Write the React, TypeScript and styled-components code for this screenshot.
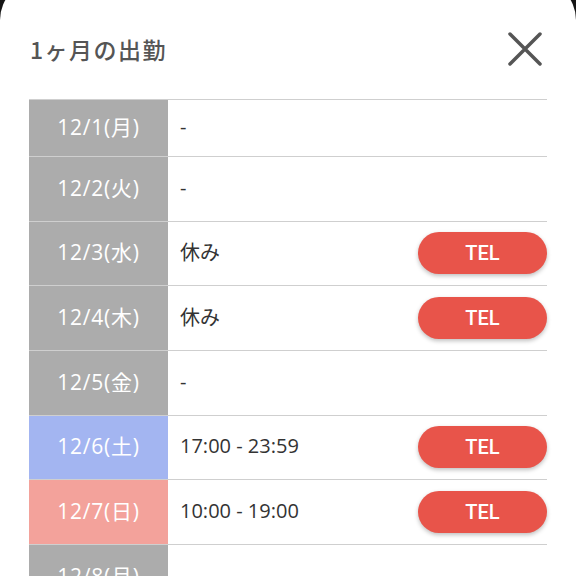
import styled, { createGlobalStyle } from 'styled-components'

const GlobalStyle = createGlobalStyle`
  html, body {
    margin: 0;
    padding: 0;
    background: #151515;
    height: 576px;
    overflow: hidden;
  }
  * {
    box-sizing: border-box;
  }
`

const Modal = styled.div`
  margin-top: -20px;
  background: #ffffff;
  border-radius: 40px 40px 0 0;
  min-height: 620px;
  padding: 44px 29px 0 29px;
  font-family: 'Open Sans', 'Noto Sans CJK JP', sans-serif;
`

const Header = styled.div`
  display: flex;
  align-items: center;
  justify-content: space-between;
  height: 50px;
  margin-bottom: 25px;
`

const Title = styled.h2`
  margin: 0 0 0 1px;
  font-family: 'Noto Sans CJK JP', sans-serif;
  font-size: 23px;
  font-weight: 500;
  color: #555555;
  letter-spacing: 1.5px;
`

const CloseButton = styled.button`
  border: none;
  background: none;
  padding: 0;
  margin-right: 5px;
  width: 34px;
  height: 34px;
  display: flex;
  cursor: pointer;
`

const Table = styled.div`
  border-top: 1px solid #cfcfcf;
`

const Row = styled.div<{ $first?: boolean }>`
  display: grid;
  grid-template-columns: 139px 1fr;
  height: ${(p) => (p.$first ? 57 : 64.67)}px;
  border-bottom: 1px solid #cfcfcf;
`

type DayKind = 'weekday' | 'sat' | 'sun'

const dayColors: Record<DayKind, string> = {
  weekday: '#acacac',
  sat: '#a3b5f1',
  sun: '#f3a29b',
}

const DateCell = styled.div<{ $kind: DayKind }>`
  background: ${(p) => dayColors[p.$kind]};
  color: #ffffff;
  font-size: 21px;
  font-weight: 400;
  letter-spacing: 0.8px;
  display: flex;
  align-items: center;
  justify-content: center;
  padding-bottom: 4px;
`

const InfoCell = styled.div`
  display: flex;
  align-items: center;
  justify-content: space-between;
  padding-left: 12px;
  font-size: 20px;
  font-weight: 400;
  color: #333333;
`

const InfoText = styled.span`
  padding-bottom: 3px;
`

const TelButton = styled.button`
  width: 129px;
  height: 42px;
  border: none;
  border-radius: 21px;
  background: #e8544a;
  color: #ffffff;
  font-family: Roboto, 'Noto Sans', sans-serif;
  font-size: 20px;
  font-weight: 500;
  box-shadow: 0 2px 4px rgba(0, 0, 0, 0.25);
  cursor: pointer;
`

type Day = {
  date: string
  kind: DayKind
  info: string
  tel: boolean
}

const days: Day[] = [
  { date: '12/1(月)', kind: 'weekday', info: '-', tel: false },
  { date: '12/2(火)', kind: 'weekday', info: '-', tel: false },
  { date: '12/3(水)', kind: 'weekday', info: '休み', tel: true },
  { date: '12/4(木)', kind: 'weekday', info: '休み', tel: true },
  { date: '12/5(金)', kind: 'weekday', info: '-', tel: false },
  { date: '12/6(土)', kind: 'sat', info: '17:00 - 23:59', tel: true },
  { date: '12/7(日)', kind: 'sun', info: '10:00 - 19:00', tel: true },
  { date: '12/8(月)', kind: 'weekday', info: '', tel: false },
]

const App = () => (
  <>
    <GlobalStyle />
    <Modal>
      <Header>
        <Title>1ヶ月の出勤</Title>
        <CloseButton aria-label="close">
          <svg width="34" height="34" viewBox="0 0 34 34">
            <path d="M2 2 L32 32 M32 2 L2 32" stroke="#555555" strokeWidth="3.5" strokeLinecap="round" />
          </svg>
        </CloseButton>
      </Header>
      <Table>
        {days.map((d, i) => (
          <Row key={d.date} $first={i === 0}>
            <DateCell $kind={d.kind}>{d.date}</DateCell>
            <InfoCell>
              <InfoText>{d.info}</InfoText>
              {d.tel && <TelButton>TEL</TelButton>}
            </InfoCell>
          </Row>
        ))}
      </Table>
    </Modal>
  </>
)

export default App
